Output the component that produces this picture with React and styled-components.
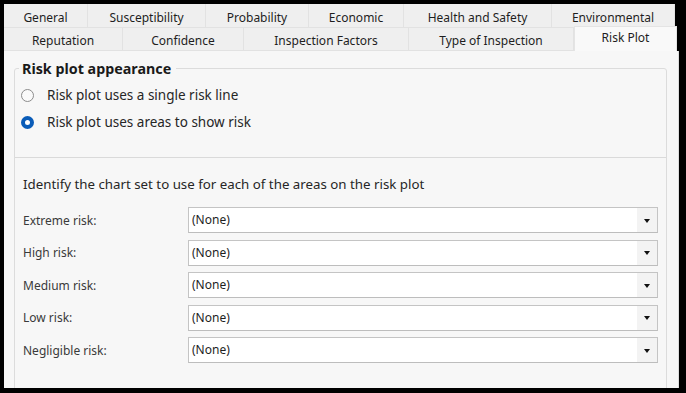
import React, { useState } from 'react'
import styled, { createGlobalStyle } from 'styled-components'

const GlobalStyle = createGlobalStyle`
  html, body {
    margin: 0;
    padding: 0;
    background: #000;
  }
  body {
    font-family: "Noto Sans", "Liberation Sans", sans-serif;
    font-size: 12px;
    color: #222;
  }
`

const Frame = styled.div`
  width: 686px;
  height: 393px;
  box-sizing: border-box;
  padding: 4px 7px 5px 4px;
  background: #000;
  overflow: hidden;
`

const Window = styled.div`
  height: 100%;
  display: flex;
  flex-direction: column;
  background: #f7f7f7;
`

const TabRow = styled.div`
  display: flex;
  height: ${props => props.height}px;
  background: #000;
`

const Tab = styled.div`
  width: ${props => props.width}px;
  box-sizing: border-box;
  display: flex;
  align-items: center;
  justify-content: center;
  padding-top: ${props => props.shift}px;
  background: ${props => (props.selected ? '#f9f9f9' : '#efefef')};
  border-right: 1px solid #e2e2e2;
  border-bottom: 1px solid #e2e2e2;
  color: #1e1e1e;
  white-space: nowrap;
  ${props => props.selected && `
    margin-top: -2px;
    border: 1px solid #e4e4e4;
    border-bottom: none;
    padding-top: 0;
    padding-bottom: 4px;
  `}
`

const RowFill = styled.div`
  flex: 1;
  background: #000;
`

const Panel = styled.div`
  flex: 1;
  background: #f7f7f7;
  border-right: 1px solid #dcdcdc;
  padding: 8px 11px 0 10px;
  overflow: hidden;
`

const Group = styled.fieldset`
  margin: 0;
  padding: 0 0 40px;
  border: 1px solid #dcdcdc;
  border-radius: 3px;
`

const Legend = styled.legend`
  margin-left: 4px;
  padding: 0 5px 0 3px;
  font-size: 14.3px;
  font-weight: 700;
  color: #1a1a1a;
`

const RadioList = styled.div`
  display: flex;
  flex-direction: column;
  gap: 7px;
  padding: 7px 0 0 6px;
`

const RadioRow = styled.label`
  display: flex;
  align-items: center;
  gap: 13px;
  height: 20px;
  font-size: 13.5px;
  color: #262626;
  cursor: pointer;
`

const RadioDot = styled.span`
  flex: none;
  width: 13px;
  height: 13px;
  box-sizing: border-box;
  border-radius: 50%;
  border: ${props => (props.checked ? '4px solid #0a5cb8' : '1px solid #8c8c8c')};
  background: ${props => (props.checked ? '#fff' : '#fafafa')};
`

const Separator = styled.div`
  height: 1px;
  background: #dadada;
  margin: 25px 0 0;
`

const Hint = styled.div`
  padding: 17px 0 0 8px;
  font-size: 13.3px;
  color: #262626;
`

const Fields = styled.div`
  display: flex;
  flex-direction: column;
  gap: 6.5px;
  padding: 14px 8px 0 8px;
`

const FieldRow = styled.div`
  display: flex;
  align-items: center;
  height: 26px;
`

const FieldLabel = styled.div`
  width: 165px;
  color: #3a3a3a;
`

const Combo = styled.div`
  flex: 1;
  height: 26px;
  box-sizing: border-box;
  display: flex;
  background: #fff;
  border: 1px solid #c4c4c4;
  border-bottom-color: #bdbdbd;
`

const ComboValue = styled.div`
  flex: 1;
  padding: 3px 0 0 3px;
  color: #1e1e1e;
`

const ComboButton = styled.div`
  width: 20px;
  display: flex;
  align-items: center;
  justify-content: center;
  background: #f3f3f3;
`

const Arrow = styled.span`
  width: 0;
  height: 0;
  border-left: 3.5px solid transparent;
  border-right: 3.5px solid transparent;
  border-top: 4px solid #111;
  margin-top: 1px;
`

const topTabs = [
  ['General', 84],
  ['Susceptibility', 118],
  ['Probability', 103],
  ['Economic', 95],
  ['Health and Safety', 148],
  ['Environmental', 123],
]

const bottomTabs = [
  ['Reputation', 119],
  ['Confidence', 121],
  ['Inspection Factors', 165],
  ['Type of Inspection', 165],
  ['Risk Plot', 103],
]

const areas = ['Extreme risk:', 'High risk:', 'Medium risk:', 'Low risk:', 'Negligible risk:']

const App = () => {
  const [mode, setMode] = useState('areas')

  return (
    <Frame>
      <GlobalStyle />
      <Window>
        <TabRow height={24}>
          {topTabs.map(([name, width]) => (
            <Tab key={name} width={width} shift={3}>{name}</Tab>
          ))}
          <RowFill />
        </TabRow>
        <TabRow height={23}>
          {bottomTabs.map(([name, width]) => (
            <Tab key={name} width={width} shift={2} selected={name === 'Risk Plot'}>{name}</Tab>
          ))}
          <RowFill />
        </TabRow>

        <Panel>
          <Group>
            <Legend>Risk plot appearance</Legend>
            <RadioList>
              <RadioRow onClick={() => setMode('line')}>
                <RadioDot checked={mode === 'line'} />
                Risk plot uses a single risk line
              </RadioRow>
              <RadioRow onClick={() => setMode('areas')}>
                <RadioDot checked={mode === 'areas'} />
                Risk plot uses areas to show risk
              </RadioRow>
            </RadioList>

            <Separator />
            <Hint>Identify the chart set to use for each of the areas on the risk plot</Hint>

            <Fields>
              {areas.map(area => (
                <FieldRow key={area}>
                  <FieldLabel>{area}</FieldLabel>
                  <Combo>
                    <ComboValue>(None)</ComboValue>
                    <ComboButton><Arrow /></ComboButton>
                  </Combo>
                </FieldRow>
              ))}
            </Fields>
          </Group>
        </Panel>
      </Window>
    </Frame>
  )
}

export default App
